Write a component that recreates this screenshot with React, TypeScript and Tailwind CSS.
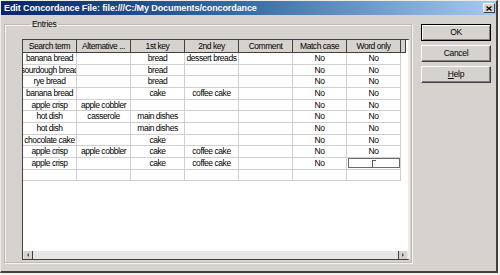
const rows: string[][] = [
  ["banana bread", "", "bread", "dessert breads", "", "No", "No"],
  ["sourdough bread", "", "bread", "", "", "No", "No"],
  ["rye bread", "", "bread", "", "", "No", "No"],
  ["banana bread", "", "cake", "coffee cake", "", "No", "No"],
  ["apple crisp", "apple cobbler", "", "", "", "No", "No"],
  ["hot dish", "casserole", "main dishes", "", "", "No", "No"],
  ["hot dish", "", "main dishes", "", "", "No", "No"],
  ["chocolate cake", "", "cake", "", "", "No", "No"],
  ["apple crisp", "apple cobbler", "cake", "coffee cake", "", "No", "No"],
  ["apple crisp", "", "cake", "coffee cake", "", "No", "EDIT"],
  ["", "", "", "", "", "", ""],
];

const headers = ["Search term", "Alternative ...", "1st key", "2nd key", "Comment", "Match case", "Word only"];

function Button({ children, isDefault }: { children: React.ReactNode; isDefault?: boolean }) {
  return (
    <div
      className={
        "w-[70px] h-[17px] flex items-center justify-center text-[8.5px] tracking-[-0.3px] text-black bg-[#d6d3ce] " +
        (isDefault
          ? "border border-black shadow-[inset_1px_1px_#ffffff,inset_-1px_-1px_#808080]"
          : "border border-t-white border-l-white border-r-[#404040] border-b-[#404040] shadow-[inset_-1px_-1px_#808080]")
      }
    >
      {children}
    </div>
  );
}

function Cell({ value }: { value: string }) {
  return (
    <div className="w-[54px] h-full shrink-0 border-r border-b border-[#cfcfcf] flex items-center justify-center overflow-hidden whitespace-nowrap">
      {value === "EDIT" ? (
        <div className="w-[52px] h-[10px] border border-[#6b6b6b] bg-white flex items-start justify-center pt-[1px]">
          <span className="w-[4px] h-[7px] border-l border-t border-[#555] ml-[1px]" />
        </div>
      ) : (
        <span className="shrink-0">{value}</span>
      )}
    </div>
  );
}

export default function App() {
  return (
    <div className="w-[500px] h-[275px] bg-[#f2f1ee] font-['Liberation_Sans',Arial,sans-serif]">
      <div className="w-[498px] h-[273px] bg-[#d6d3ce] border-l border-t border-l-[#ecebe7] border-t-[#ecebe7] border-r-2 border-b-2 border-r-[#404040] border-b-[#404040] flex flex-col">
        {/* title bar */}
        <div className="h-[14px] shrink-0 flex items-center bg-linear-to-r from-[#0a246a] via-[#3a6ea5] to-[#a6caf0]">
          <span className="pl-[3px] text-[9px] font-bold text-white tracking-[-0.1px] leading-[14px] whitespace-nowrap">
            Edit Concordance File: file:///C:/My Documents/concordance
          </span>
          <div className="ml-auto mr-[1px] w-[12px] h-[10px] bg-[#d6d3ce] border border-t-white border-l-white border-r-[#404040] border-b-[#404040] flex items-center justify-center">
            <svg width="6" height="5" viewBox="0 0 6 5">
              <path d="M0.5 0.5 L5.5 4.5 M5.5 0.5 L0.5 4.5" stroke="#000" strokeWidth="1.3" />
            </svg>
          </div>
        </div>

        <div className="flex flex-row flex-1">
          {/* Entries group */}
          <fieldset className="ml-[3px] mt-[5px] w-[408px] h-[243px] border border-[#bdbab4] shadow-[1px_1px_#f4f3f0,inset_1px_1px_#f4f3f0] pl-[17px] pt-[10px]">
            <legend className="ml-[8px] px-[2px] text-[8.5px] tracking-[-0.3px] text-black leading-[9px]">Entries</legend>
            <div className="w-[388px] h-[221px] flex flex-col border-l border-t border-b border-[#404040] border-r-2 border-r-[#ecebe7] bg-white text-[8.5px] tracking-[-0.45px] text-black">
              {/* header */}
              <div className="h-[13px] shrink-0 flex flex-row">
                {headers.map((h) => (
                  <div
                    key={h}
                    className="w-[54px] shrink-0 bg-[#d6d3ce] border-r border-b border-[#404040] flex items-center justify-center whitespace-nowrap overflow-hidden"
                  >
                    {h}
                  </div>
                ))}
                <div className="w-[5px] shrink-0 bg-[#d6d3ce] border-r border-b border-[#404040]" />
              </div>
              {/* rows */}
              <div className="flex-1 flex flex-col">
                {rows.map((r, i) => (
                  <div key={i} className="h-[11.67px] shrink-0 flex flex-row">
                    {r.map((v, j) => (
                      <Cell key={j} value={v} />
                    ))}
                  </div>
                ))}
              </div>
              {/* horizontal scrollbar */}
              <div className="h-[8px] shrink-0 flex flex-row bg-[#e8e6e2]">
                <div className="ml-[1px] w-[9px] h-full bg-[#d6d3ce] border-r border-[#404040] flex items-center justify-center">
                  <span className="w-0 h-0 border-y-[2px] border-y-transparent border-r-[2px] border-r-[#555]" />
                </div>
                <div className="flex-1" />
                <div className="mr-[1px] w-[9px] h-full bg-[#d6d3ce] border-l border-[#404040] flex items-center justify-center">
                  <span className="w-0 h-0 border-y-[2px] border-y-transparent border-l-[2px] border-l-[#555]" />
                </div>
              </div>
            </div>
          </fieldset>

          {/* buttons */}
          <div className="ml-[9px] mt-[9px] flex flex-col gap-[4px]">
            <Button isDefault>OK</Button>
            <Button>Cancel</Button>
            <Button>
              <span>
                <span className="underline">H</span>elp
              </span>
            </Button>
          </div>
        </div>
      </div>
    </div>
  );
}
